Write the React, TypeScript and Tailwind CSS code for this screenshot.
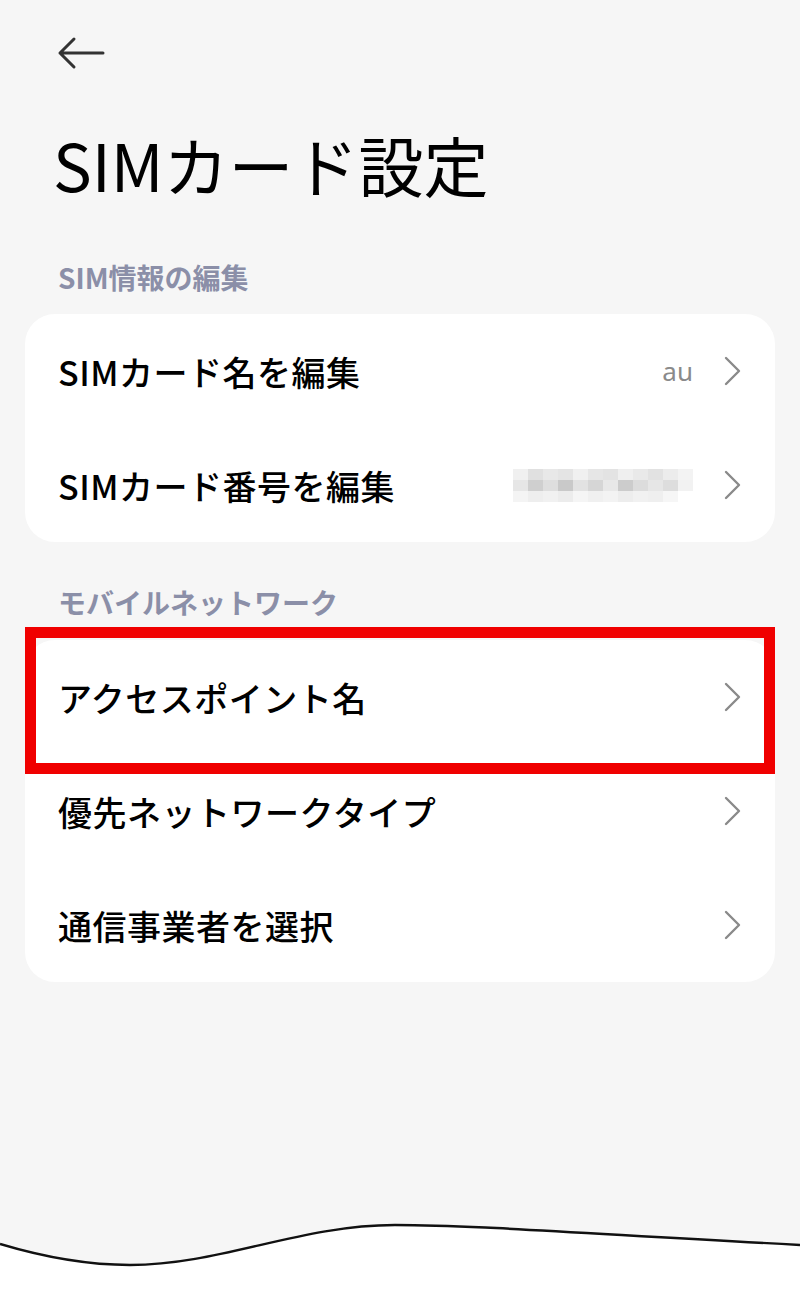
const jp = { fontFamily: '"Noto Sans CJK JP", "Noto Sans", sans-serif' };

function Chevron() {
  return (
    <svg width="20" height="30" viewBox="0 0 20 30" className="shrink-0">
      <path d="M3 2 L16 15 L3 28" fill="none" stroke="#8a8a8a" strokeWidth="2.4" strokeLinecap="round" strokeLinejoin="round" />
    </svg>
  );
}

function Pixelated() {
  const shades = [
    ["#f0f0f0", "#e0e0e0", "#e8e8e8", "#e4e4e4", "#f0f0f0", "#e6e6e6", "#e3e3e3", "#efefef", "#e9e9e9", "#e2e2e2", "#ececec", "#f3f3f3"],
    ["#e6e6e6", "#cfcfcf", "#dedede", "#c9c9c9", "#e2e2e2", "#d6d6d6", "#e8e8e8", "#cccccc", "#dcdcdc", "#e6e6e6", "#dddddd", "#f2f2f2"],
    ["#f4f4f4", "#eeeeee", "#f1f1f1", "#ececec", "#f5f5f5", "#f0f0f0", "#f3f3f3", "#ededed", "#f1f1f1", "#efefef", "#f6f6f6", "#ffffff"],
  ];
  return (
    <div className="flex flex-col">
      {shades.map((row, i) => (
        <div key={i} className="flex">
          {row.map((c, j) => (
            <div key={j} className="h-[11px] w-[15px]" style={{ backgroundColor: c }} />
          ))}
        </div>
      ))}
    </div>
  );
}

function Row({ label, value, highlight }: { label: string; value?: React.ReactNode; highlight?: boolean }) {
  return (
    <div className={highlight ? "relative" : ""}>
      <div className="flex h-[114px] items-center justify-between pl-[33px] pr-[32px]">
        <span className="text-[34px] font-medium tracking-[0.5px] text-black" style={jp}>
          {label}
        </span>
        <div className="flex items-center gap-[30px]">
          {value}
          <Chevron />
        </div>
      </div>
      {highlight && (
        <div className="pointer-events-none absolute left-0 right-0 top-[-13px] bottom-[-20px] border-[11px] border-[#f00000]" />
      )}
    </div>
  );
}

export default function App() {
  return (
    <div className="relative flex h-[1300px] w-[800px] flex-col overflow-hidden bg-[#f6f6f6]" style={jp}>
      <div className="px-[25px]">
        <div className="pl-[32px] pt-[36px]">
          <svg width="48" height="34" viewBox="0 0 48 34">
            <path d="M46 17 H3 M17 3 L3 17 L17 31" fill="none" stroke="#333333" strokeWidth="3" strokeLinecap="round" strokeLinejoin="round" />
          </svg>
        </div>
        <h1 className="mt-[62px] pl-[28px] text-[65px] font-normal leading-none text-black">SIMカード設定</h1>
        <div className="mt-[66px] pl-[33px] text-[28px] font-bold leading-none text-[#8b8fa8]">SIM情報の編集</div>
        <div className="mt-[23px] rounded-[30px] bg-white">
          <Row label="SIMカード名を編集" value={<span className="text-[26px] text-[#8a8a8a]" style={{ fontFamily: '"Noto Sans", sans-serif' }}>au</span>} />
          <Row label="SIMカード番号を編集" value={<Pixelated />} />
        </div>
        <div className="mt-[46px] pl-[33px] text-[28px] font-bold leading-none text-[#8b8fa8]">モバイルネットワーク</div>
        <div className="mt-[24px] rounded-[30px] bg-white">
          <Row label="アクセスポイント名" highlight />
          <Row label="優先ネットワークタイプ" />
          <Row label="通信事業者を選択" />
        </div>
      </div>
      <svg className="absolute bottom-0 left-0" width="800" height="90" viewBox="0 1210 800 90">
        <path d="M0 1244 C60 1262 100 1265 130 1265 C220 1265 300 1225 395 1225 C470 1225 560 1232 800 1245 L800 1300 L0 1300 Z" fill="#ffffff" />
        <path d="M0 1244 C60 1262 100 1265 130 1265 C220 1265 300 1225 395 1225 C470 1225 560 1232 800 1245" fill="none" stroke="#111111" strokeWidth="2.4" />
      </svg>
    </div>
  );
}
